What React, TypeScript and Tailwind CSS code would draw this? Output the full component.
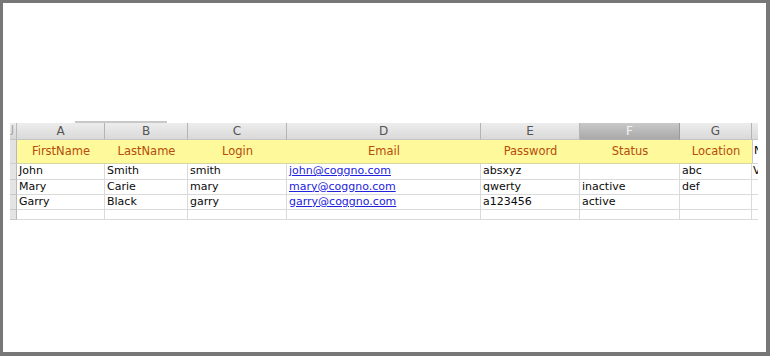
import React from "react";

const cols = ["A", "B", "C", "D", "E", "F", "G"];
const heads = ["FirstName", "LastName", "Login", "Email", "Password", "Status", "Location"];
const rows: string[][] = [
  ["John", "Smith", "smith", "john@coggno.com", "absxyz", "", "abc", "V"],
  ["Mary", "Carie", "mary", "mary@coggno.com", "qwerty", "inactive", "def", ""],
  ["Garry", "Black", "garry", "garry@coggno.com", "a123456", "active", "", ""],
  ["", "", "", "", "", "", "", ""],
];

export default function App() {
  return (
    <div
      className="w-[770px] h-[356px] bg-white border-[#777777] border-t-[3px] border-l-[3px] border-r-[4px] border-b-[4px] box-border overflow-hidden"
      style={{ fontFamily: '"DejaVu Sans", "Liberation Sans", sans-serif' }}
    >
      <div className="ml-[72px] mt-[118px] w-[92px] h-[2px] bg-[#c8c8c8]" />
      <div className="ml-[7px] grid grid-cols-[7px_88px_83px_99px_194px_99px_100px_72px_6px] grid-rows-[17px_24px_16px_15px_15px_10px] w-[748px] overflow-hidden">
        {/* header row */}
        <div className="bg-gradient-to-b from-[#ececec] to-[#d6d6d6] border-r border-[#b8b8b8] border-b border-b-[#c4c4c4] relative overflow-hidden">
          <span className="absolute left-[1px] top-[2px] text-[10px] leading-none text-[#9a9a9a]">J</span>
        </div>
        {cols.map((c) => (
          <div
            key={c}
            className={
              c === "F"
                ? "flex items-center justify-center bg-gradient-to-b from-[#c9c9c9] to-[#a9a9a9] border-r border-[#9a9a9a] border-b border-b-[#b0b0b0] text-[12px] text-[#f4f4f4]"
                : "flex items-center justify-center bg-gradient-to-b from-[#ededed] to-[#d9d9d9] border-r border-[#b4b4b4] border-b border-b-[#c4c4c4] text-[12px] text-[#555555]"
            }
          >
            {c}
          </div>
        ))}
        <div className="bg-gradient-to-b from-[#ededed] to-[#d9d9d9] border-b border-[#c4c4c4]" />

        {/* yellow header row */}
        <div className="bg-[#e2e2e2] border-r border-[#b8b8b8] border-b border-b-[#d0d0d0]" />
        {heads.map((h) => (
          <div
            key={h}
            className="flex items-center justify-center bg-[#fef99a] border-b border-[#d8d6a0] text-[11.5px] text-[#b44d0d]"
          >
            {h}
          </div>
        ))}
        <div className="flex items-center bg-white border-l border-[#c8c8c8] border-b border-b-[#d8d8d8] text-[11px] text-black overflow-hidden whitespace-nowrap pl-[1px]">
          N
        </div>

        {/* data rows */}
        {rows.map((r, i) => (
          <React.Fragment key={i}>
            <div className="bg-[#e4e4e4] border-r border-[#b8b8b8] border-b border-b-[#c8c8c8]" />
            {r.map((v, j) => (
              <div
                key={j}
                className={
                  "flex items-center overflow-hidden whitespace-nowrap text-[11px] text-[#0a0a0a] border-b border-[#dadada] " +
                  (j < 7 ? "border-r pl-[2px]" : "pl-[1px]")
                }
              >
                {j === 3 && v ? (
                  <span className="text-[#2222dd] underline decoration-[#2222dd]">{v}</span>
                ) : (
                  v
                )}
              </div>
            ))}
          </React.Fragment>
        ))}
      </div>
    </div>
  );
}
